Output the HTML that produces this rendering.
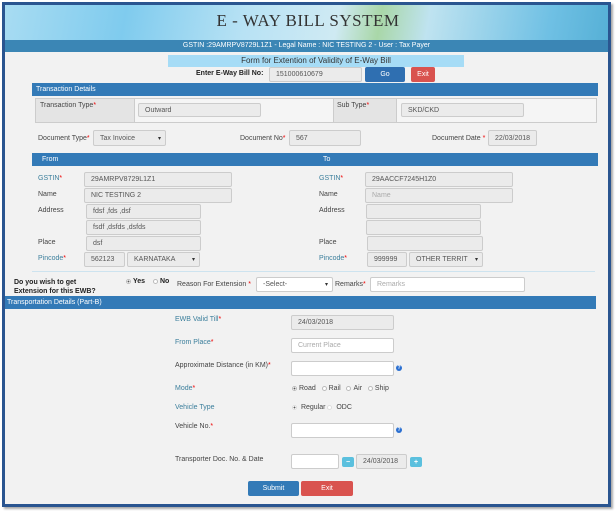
<!DOCTYPE html>
<html><head><meta charset="utf-8"><style>
*{box-sizing:border-box;margin:0;padding:0}
body{width:616px;height:511px;background:#fff;font-family:"Liberation Sans",sans-serif;font-size:7px;color:#333;position:relative;overflow:hidden}
.a{position:absolute}
.frame{left:2px;top:2px;width:609px;height:505px;border:3px solid #2a5590;background:#f2f2f2;box-shadow:2px 2px 2px #aaa}
.inp{position:absolute;background:#ebebeb;border:1px solid #ccc;border-radius:2px;font-size:7px;color:#555;padding-left:6px;display:flex;align-items:center}
.w{background:#fff}
.bar{position:absolute;background:#337ab7;color:#fff;font-size:7px;padding-left:4px;display:flex;align-items:center}
.lbl{position:absolute;font-size:7px;color:#444}
.t{color:#3c7f9c}
.r{color:#e00}
.sel:after{content:"▾";position:absolute;right:4px;font-size:6px;color:#333}
.rad{display:inline-block;width:5px;height:5px;border:1px solid #bbb;border-radius:50%;background:#fff;vertical-align:middle;margin-right:2px}
.rad.on{background:radial-gradient(#555 35%,#fff 45%)}
.btn{position:absolute;color:#fff;font-size:7px;display:flex;align-items:center;justify-content:center;border-radius:2px}
.q{position:absolute;width:6px;height:6px;border-radius:50%;background:#2a6fd1;color:#fff;font-size:5px;line-height:6px;text-align:center;font-weight:bold}
</style></head><body>
<div class="a frame"></div>
<div class="a" style="left:5px;top:5px;width:603px;height:35px;background:linear-gradient(100deg,#a8dcf2 0%,#7fcbee 20%,#b8e2f4 40%,#cfeaf3 55%,#a9d7a8 62%,#bfe3f0 70%,#6fc0e4 90%,#56b0d6 100%)"></div>
<div class="a" style="left:0;top:11px;width:616px;text-align:center;font-family:'Liberation Serif',serif;font-size:17px;color:#333;letter-spacing:0.5px">E - WAY BILL SYSTEM</div>
<div class="a" style="left:5px;top:40px;width:603px;height:12px;background:#3b86b5;color:#fff;font-size:7px;text-align:center;line-height:12px">GSTIN :29AMRPV8729L1Z1 - Legal Name : NIC TESTING 2 - User : Tax Payer</div>
<div class="a" style="left:168px;top:55px;width:296px;height:12px;background:#a6dcf6;color:#333;font-size:8px;text-align:center;line-height:12px">Form for Extention of Validity of E-Way Bill</div>
<div class="lbl" style="left:196px;top:70px;font-weight:bold;color:#222">Enter E-Way Bill No:</div>
<div class="inp" style="left:269px;top:67px;width:93px;height:15px">151000610679</div>
<div class="btn" style="left:365px;top:67px;width:40px;height:15px;background:#2f6fb1">Go</div>
<div class="btn" style="left:411px;top:67px;width:24px;height:15px;background:#d9534f">Exit</div>

<div class="bar" style="left:32px;top:83px;width:566px;height:13px">Transaction Details</div>
<div class="a" style="left:35px;top:98px;width:562px;height:25px;border:1px solid #ccc;background:#f5f5f5"></div>
<div class="a" style="left:35px;top:98px;width:100px;height:25px;background:#e4e4e4;border:1px solid #ccc"></div>
<div class="a" style="left:333px;top:98px;width:64px;height:25px;background:#e4e4e4;border:1px solid #ccc"></div>
<div class="lbl" style="left:40px;top:102px">Transaction Type<span class="r">*</span></div>
<div class="inp" style="left:138px;top:103px;width:123px;height:14px">Outward</div>
<div class="lbl" style="left:337px;top:102px">Sub Type<span class="r">*</span></div>
<div class="inp" style="left:401px;top:103px;width:123px;height:14px">SKD/CKD</div>

<div class="lbl" style="left:38px;top:135px">Document Type<span class="r">*</span></div>
<div class="inp sel" style="left:93px;top:130px;width:73px;height:16px">Tax Invoice</div>
<div class="lbl" style="left:240px;top:135px">Document No<span class="r">*</span></div>
<div class="inp" style="left:289px;top:130px;width:72px;height:16px">567</div>
<div class="lbl" style="left:432px;top:135px">Document Date <span class="r">*</span></div>
<div class="inp" style="left:488px;top:130px;width:49px;height:16px">22/03/2018</div>

<div class="bar" style="left:32px;top:153px;width:566px;height:13px;padding-left:10px">From<span style="position:absolute;left:291px">To</span></div>

<div class="lbl t" style="left:38px;top:175px">GSTIN<span class="r">*</span></div>
<div class="inp" style="left:84px;top:172px;width:148px;height:15px">29AMRPV8729L1Z1</div>
<div class="lbl" style="left:38px;top:191px">Name</div>
<div class="inp" style="left:84px;top:188px;width:148px;height:15px">NIC TESTING 2</div>
<div class="lbl" style="left:38px;top:207px">Address</div>
<div class="inp" style="left:86px;top:204px;width:115px;height:15px">fdsf ,fds ,dsf</div>
<div class="inp" style="left:86px;top:220px;width:115px;height:15px">fsdf ,dsfds ,dsfds</div>
<div class="lbl" style="left:38px;top:239px">Place</div>
<div class="inp" style="left:86px;top:236px;width:115px;height:15px">dsf</div>
<div class="lbl t" style="left:38px;top:255px">Pincode<span class="r">*</span></div>
<div class="inp" style="left:84px;top:252px;width:41px;height:15px">562123</div>
<div class="inp sel" style="left:127px;top:252px;width:73px;height:15px">KARNATAKA</div>

<div class="lbl t" style="left:319px;top:175px">GSTIN<span class="r">*</span></div>
<div class="inp" style="left:365px;top:172px;width:148px;height:15px">29AACCF7245H1Z0</div>
<div class="lbl" style="left:319px;top:191px">Name</div>
<div class="inp" style="left:365px;top:188px;width:148px;height:15px;color:#aaa">Name</div>
<div class="lbl" style="left:319px;top:207px">Address</div>
<div class="inp" style="left:366px;top:204px;width:115px;height:15px"></div>
<div class="inp" style="left:366px;top:220px;width:115px;height:15px"></div>
<div class="lbl" style="left:319px;top:239px">Place</div>
<div class="inp" style="left:367px;top:236px;width:116px;height:15px"></div>
<div class="lbl t" style="left:319px;top:255px">Pincode<span class="r">*</span></div>
<div class="inp" style="left:367px;top:252px;width:40px;height:15px">999999</div>
<div class="inp sel" style="left:409px;top:252px;width:74px;height:15px">OTHER TERRIT</div>

<div class="a" style="left:32px;top:271px;width:563px;height:1px;background:#cde3ef"></div>
<div class="lbl" style="left:14px;top:278px;font-weight:bold;color:#222;line-height:9px">Do you wish to get<br>Extension for this EWB?</div>
<div class="lbl" style="left:126px;top:278px;font-weight:bold;color:#222"><span class="rad on"></span>Yes</div>
<div class="lbl" style="left:153px;top:278px;font-weight:bold;color:#222"><span class="rad"></span>No</div>
<div class="lbl" style="left:177px;top:281px">Reason For Extension <span class="r">*</span></div>
<div class="inp w sel" style="left:256px;top:277px;width:77px;height:15px">-Select-</div>
<div class="lbl" style="left:335px;top:281px">Remarks<span class="r">*</span></div>
<div class="inp w" style="left:370px;top:277px;width:155px;height:15px;color:#aaa">Remarks</div>

<div class="bar" style="left:5px;top:296px;width:591px;height:13px;padding-left:2px">Transportation Details (Part-B)</div>

<div class="lbl t" style="left:175px;top:316px">EWB Valid Till<span class="r">*</span></div>
<div class="inp" style="left:291px;top:315px;width:103px;height:15px">24/03/2018</div>
<div class="lbl t" style="left:175px;top:339px">From Place<span class="r">*</span></div>
<div class="inp w" style="left:291px;top:338px;width:103px;height:15px;color:#aaa">Current Place</div>
<div class="lbl" style="left:175px;top:362px">Approximate Distance (in KM)<span class="r">*</span></div>
<div class="inp w" style="left:291px;top:361px;width:103px;height:15px"></div>
<div class="q" style="left:396px;top:365px">?</div>
<div class="lbl t" style="left:175px;top:385px">Mode<span class="r">*</span></div>
<div class="lbl" style="left:292px;top:385px"><span class="rad on"></span>Road &nbsp;&nbsp;<span class="rad"></span>Rail &nbsp;&nbsp;<span class="rad"></span>Air &nbsp;&nbsp;<span class="rad"></span>Ship</div>
<div class="lbl t" style="left:175px;top:404px">Vehicle Type</div>
<div class="lbl" style="left:292px;top:404px"><span class="rad on" style="border-color:#ddd"></span> Regular <span class="rad" style="border-color:#ddd"></span> ODC</div>
<div class="lbl" style="left:175px;top:423px">Vehicle No.<span class="r">*</span></div>
<div class="inp w" style="left:291px;top:423px;width:103px;height:15px"></div>
<div class="q" style="left:396px;top:427px">?</div>
<div class="lbl" style="left:175px;top:456px">Transporter Doc. No. &amp; Date</div>
<div class="inp w" style="left:291px;top:454px;width:48px;height:15px"></div>
<div class="btn" style="left:342px;top:457px;width:12px;height:10px;background:#5bc0de;font-weight:bold">−</div>
<div class="inp" style="left:356px;top:454px;width:51px;height:15px">24/03/2018</div>
<div class="btn" style="left:410px;top:457px;width:12px;height:10px;background:#5bc0de;font-weight:bold">+</div>
<div class="btn" style="left:248px;top:481px;width:51px;height:15px;background:#337ab7">Submit</div>
<div class="btn" style="left:301px;top:481px;width:52px;height:15px;background:#d9534f">Exit</div>
</body></html>
